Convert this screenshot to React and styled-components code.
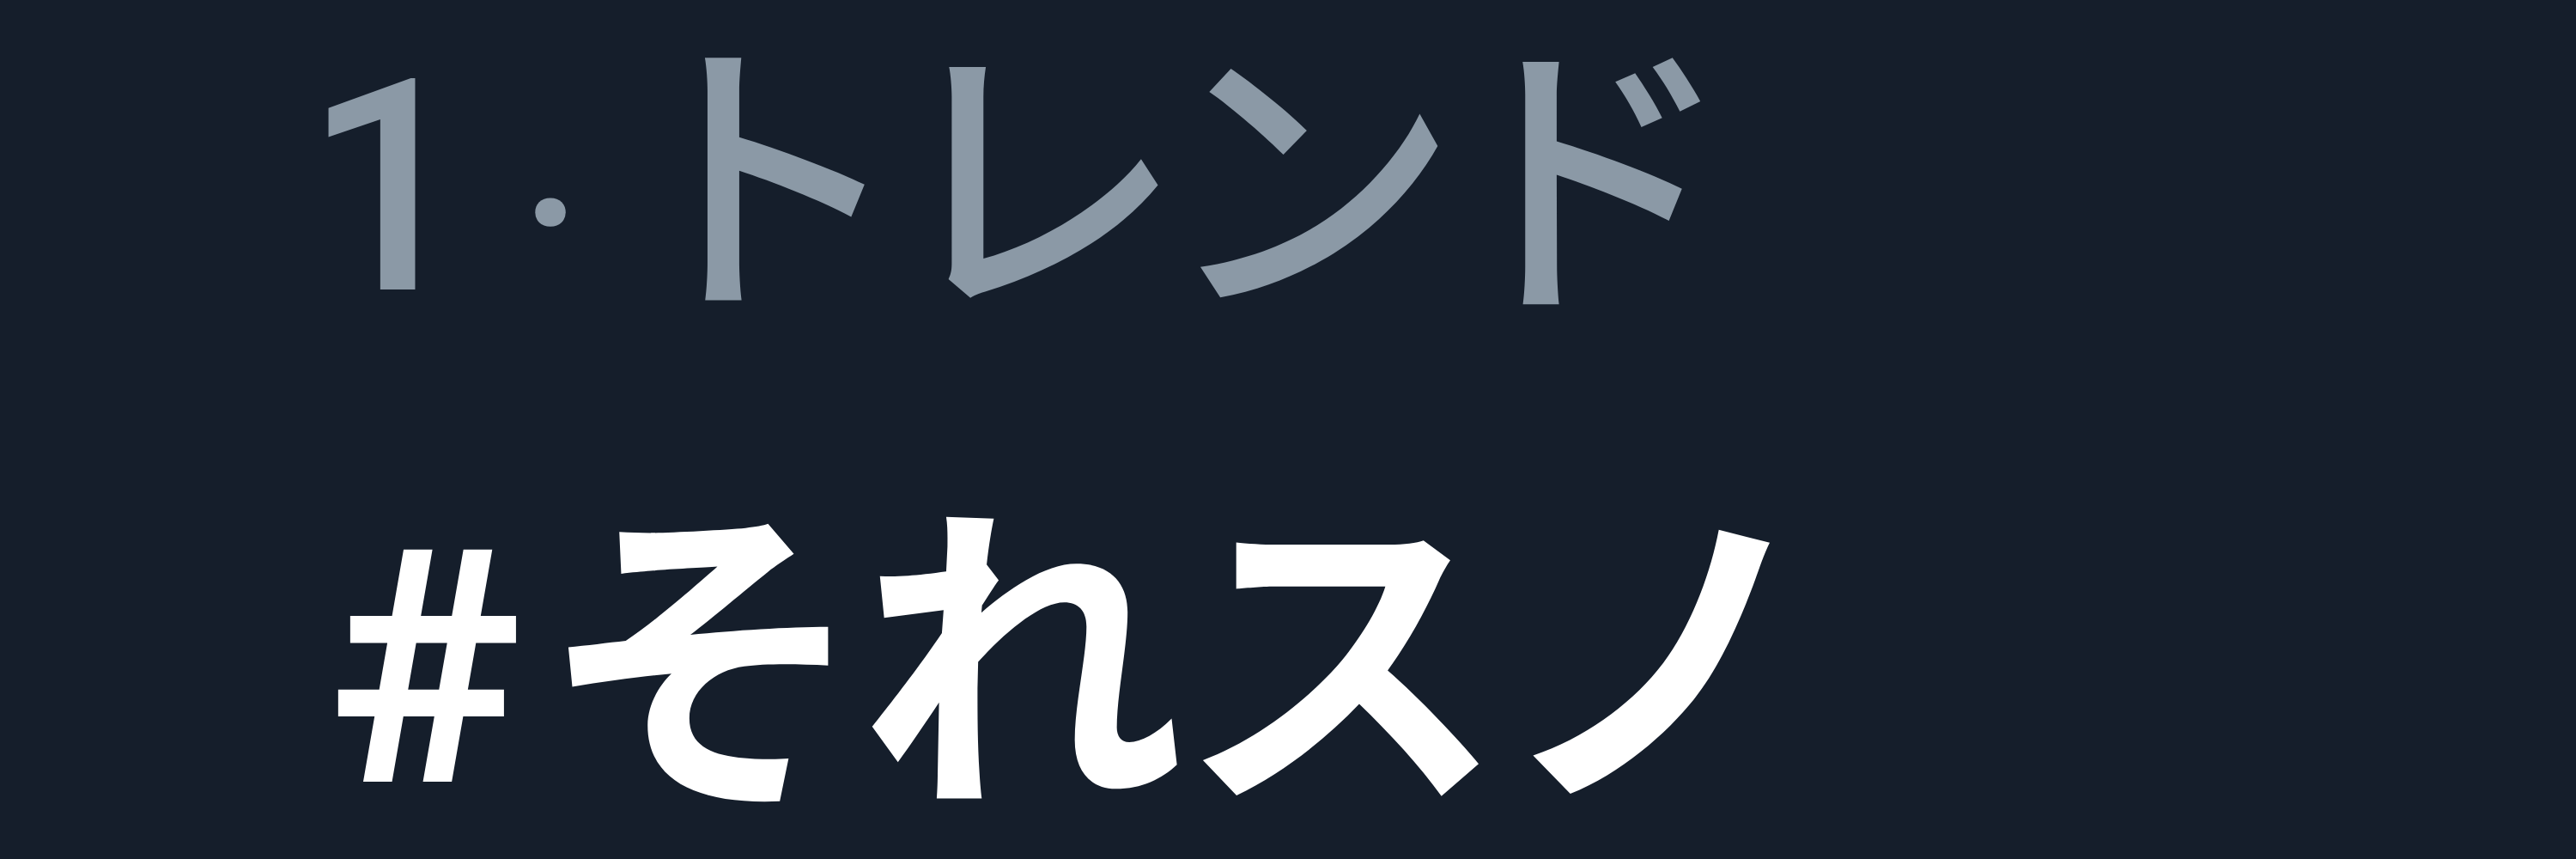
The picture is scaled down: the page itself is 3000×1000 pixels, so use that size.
import React from 'react'
import styled, { createGlobalStyle } from 'styled-components'

const GlobalStyle = createGlobalStyle`
    html, body {
        margin: 0;
        padding: 0;
        background: #151e2b;
    }
    body {
        font-family: Roboto, "Noto Sans CJK JP", sans-serif;
    }
`;

export function App() {
    const trend = { rank: 1, label: 'トレンド', tag: '#それスノ' };

    return (
        <>
            <GlobalStyle />
            <TrendItem>
                <Meta>
                    <Rank>{trend.rank}</Rank>
                    <Dot>·</Dot>
                    <Label>{trend.label}</Label>
                </Meta>
                <Tag>
                    <Hash>#</Hash>
                    <TagText>{trend.tag.slice(1)}</TagText>
                </Tag>
            </TrendItem>
        </>
    )
}

export default App


const TrendItem = styled.div`
    width: 3000px;
    height: 1000px;
    box-sizing: border-box;
    padding: 17px 0 0 354px;
    overflow: hidden;
    background: #151e2b;
`;

const Meta = styled.div`
    display: flex;
    align-items: baseline;
    font-size: 345px;
    line-height: 340px;
    font-weight: 500;
    color: #8b99a6;
    white-space: nowrap;
`;

const Rank = styled.span``;

const Dot = styled.span`
    font-size: 258px;
    margin: 0 33px 0 55px;
`;

const Label = styled.span`
    font-family: "Noto Sans CJK JP", sans-serif;
    letter-spacing: -24px;
`;

const Tag = styled.div`
    display: flex;
    align-items: baseline;
    margin-top: 115px;
    padding-left: 29px;
    font-size: 380px;
    line-height: 420px;
    font-weight: 700;
    color: #ffffff;
    white-space: nowrap;
`;

const Hash = styled.span`
    margin-right: 20px;
`;

const TagText = styled.span`
    font-family: "Noto Sans CJK JP", sans-serif;
    letter-spacing: -8px;
`;
